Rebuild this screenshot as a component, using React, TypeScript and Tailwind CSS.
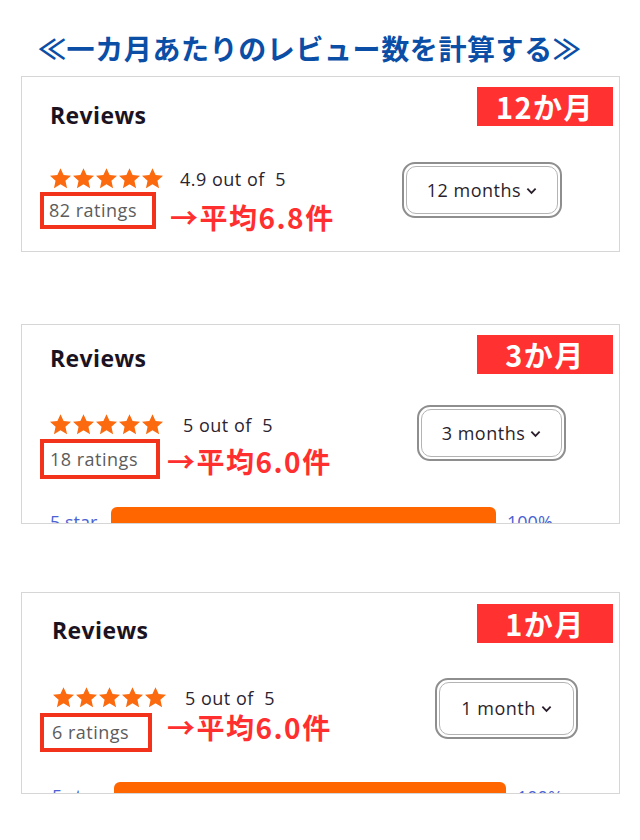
import React from 'react'

type Card = {
  badge: string
  score: string
  ratings: string
  avg: string
  period: string
  showBar: boolean
  wrap: string
  reviews: string
  badgeBox: string
  middle: string
  leftCol: string
  starsRow: string
  scoreText: string
  box: string
  avgText: string
  dropdown: string
  barRow?: string
  barLabel?: string
  bar?: string
}

const cards: Card[] = [
  {
    badge: '12か月',
    score: '4.9 out of  5',
    ratings: '82 ratings',
    avg: '→平均6.8件',
    period: '12 months',
    showBar: false,
    wrap: 'h-[176px]',
    reviews: 'mt-[23px] ml-[28px]',
    badgeBox: 'mt-[10px]',
    middle: 'mt-[32px] mr-[57px]',
    leftCol: 'ml-[18px]',
    starsRow: 'mt-[6px] pl-[10px]',
    scoreText: 'ml-[17px]',
    box: 'mt-[3px] w-[116px] h-[37px] pl-[5px]',
    avgText: 'mt-[10px] ml-[14px]',
    dropdown: 'w-[160px] h-[56px]',
  },
  {
    badge: '3か月',
    score: '5 out of  5',
    ratings: '18 ratings',
    avg: '→平均6.0件',
    period: '3 months',
    showBar: true,
    wrap: 'mt-[72px] h-[200px]',
    reviews: 'mt-[18px] ml-[28px]',
    badgeBox: 'mt-[10px]',
    middle: 'mt-[31px] mr-[53px]',
    leftCol: 'ml-[18px]',
    starsRow: 'mt-[9px] pl-[10px]',
    scoreText: 'ml-[20px]',
    box: 'mt-[4px] w-[120px] h-[40px] pl-[6px]',
    avgText: 'mt-[8px] ml-[7px]',
    dropdown: 'w-[149px] h-[56px]',
    barRow: 'mt-[28px]',
    barLabel: 'mt-[3px] ml-[28px] w-[61px]',
    bar: 'w-[385px]',
  },
  {
    badge: '1か月',
    score: '5 out of  5',
    ratings: '6 ratings',
    avg: '→平均6.0件',
    period: '1 month',
    showBar: true,
    wrap: 'mt-[68px] h-[202px]',
    reviews: 'mt-[22px] ml-[30px]',
    badgeBox: 'mt-[11px]',
    middle: 'mt-[33px] mr-[41px]',
    leftCol: 'ml-[18px]',
    starsRow: 'mt-[9px] pl-[13px]',
    scoreText: 'ml-[19px]',
    box: 'mt-[5px] w-[112px] h-[39px] pl-[8px]',
    avgText: 'mt-[1px] ml-[15px]',
    dropdown: 'w-[143px] h-[61px]',
    barRow: 'mt-[30px]',
    barLabel: 'mt-[2px] ml-[30px] w-[62px]',
    bar: 'w-[392px]',
  },
]

function Stars() {
  return (
    <div className="flex gap-[2px]">
      {[0, 1, 2, 3, 4].map((i) => (
        <svg key={i} viewBox="2 2 20 20" className="w-[21px] h-[21px]">
          <path
            d="M12 2.2l2.95 6.55 7.05.7-5.3 4.75 1.55 7-6.25-3.65-6.25 3.65 1.55-7L2 9.45l7.05-.7z"
            fill="#fb6a0e"
          />
        </svg>
      ))}
    </div>
  )
}

function ReviewCard({ c }: { c: Card }) {
  return (
    <div className={`ml-[21px] w-[599px] border border-[#d6d6d6] bg-white overflow-hidden ${c.wrap}`}>
      {/* header */}
      <div className="flex justify-between items-start">
        <h2
          className={`text-[23px] leading-[30px] font-bold tracking-[0.4px] text-[#1c1322] font-['Open_Sans',sans-serif] ${c.reviews}`}
        >
          Reviews
        </h2>
        <div
          className={`mr-[6px] w-[136px] h-[39px] bg-[#ff3131] flex items-center justify-center text-white text-[29px] font-bold tracking-[1.5px] font-['Noto_Sans_CJK_JP',sans-serif] ${c.badgeBox}`}
        >
          {c.badge}
        </div>
      </div>

      {/* rating + dropdown */}
      <div className={`flex justify-between items-start ${c.middle}`}>
        <div className={c.leftCol}>
          <div className={`flex items-start h-[21px] ${c.starsRow}`}>
            <Stars />
            <span
              className={`mt-[2px] text-[18px] leading-[19px] font-medium tracking-[0.5px] whitespace-pre text-[#2b2430] font-['Open_Sans',sans-serif] ${c.scoreText}`}
            >
              {c.score}
            </span>
          </div>
          <div className="flex items-start">
            <div
              className={`border-[4px] border-[#f2321b] flex items-center text-[18px] tracking-[0.5px] text-[#5c5c5c] font-['Open_Sans',sans-serif] ${c.box}`}
            >
              {c.ratings}
            </div>
            <span
              className={`text-[28px] leading-[36px] font-bold tracking-[1.5px] text-[#ff2f2f] font-['Noto_Sans_CJK_JP',sans-serif] ${c.avgText}`}
            >
              {c.avg}
            </span>
          </div>
        </div>

        <div
          className={`rounded-[13px] border-2 border-[#8e8e8e] p-[2px] bg-white ${c.dropdown}`}
        >
          <div className="h-full rounded-[10px] border border-[#b4b4b4] flex items-center justify-center gap-[5px]">
            <span className="text-[18px] font-medium tracking-[0.5px] text-[#2a1e2c] font-['Open_Sans',sans-serif]">
              {c.period}
            </span>
            <svg viewBox="0 0 12 8" className="w-[11px] h-[8px] mt-[1px]">
              <path d="M1.5 1.5L6 6l4.5-4.5" fill="none" stroke="#2a1e2c" strokeWidth="2" />
            </svg>
          </div>
        </div>
      </div>

      {/* first histogram row, cut off by the card */}
      {c.showBar && (
        <div className={`flex items-start ${c.barRow}`}>
          <span
            className={`text-[18px] leading-[24px] text-[#4a62d3] font-['Open_Sans',sans-serif] ${c.barLabel}`}
          >
            5 star
          </span>
          <div className={`h-[30px] rounded-[6px] bg-[#ff6600] ${c.bar}`} />
          <span className="ml-[11px] mt-[3px] text-[18px] leading-[24px] text-[#4a62d3] font-['Open_Sans',sans-serif]">
            100%
          </span>
        </div>
      )}
    </div>
  )
}

export default function App() {
  return (
    <div className="w-[640px] h-[840px] bg-white pt-[30px]">
      <h1 className="pl-[38px] mb-[10px] text-[28px] leading-[36px] font-bold tracking-[0.6px] text-[#0b4ea6] font-['Noto_Sans_CJK_JP',sans-serif]">
        ≪一カ月あたりのレビュー数を計算する≫
      </h1>

      {cards.map((c) => (
        <ReviewCard key={c.badge} c={c} />
      ))}
    </div>
  )
}
